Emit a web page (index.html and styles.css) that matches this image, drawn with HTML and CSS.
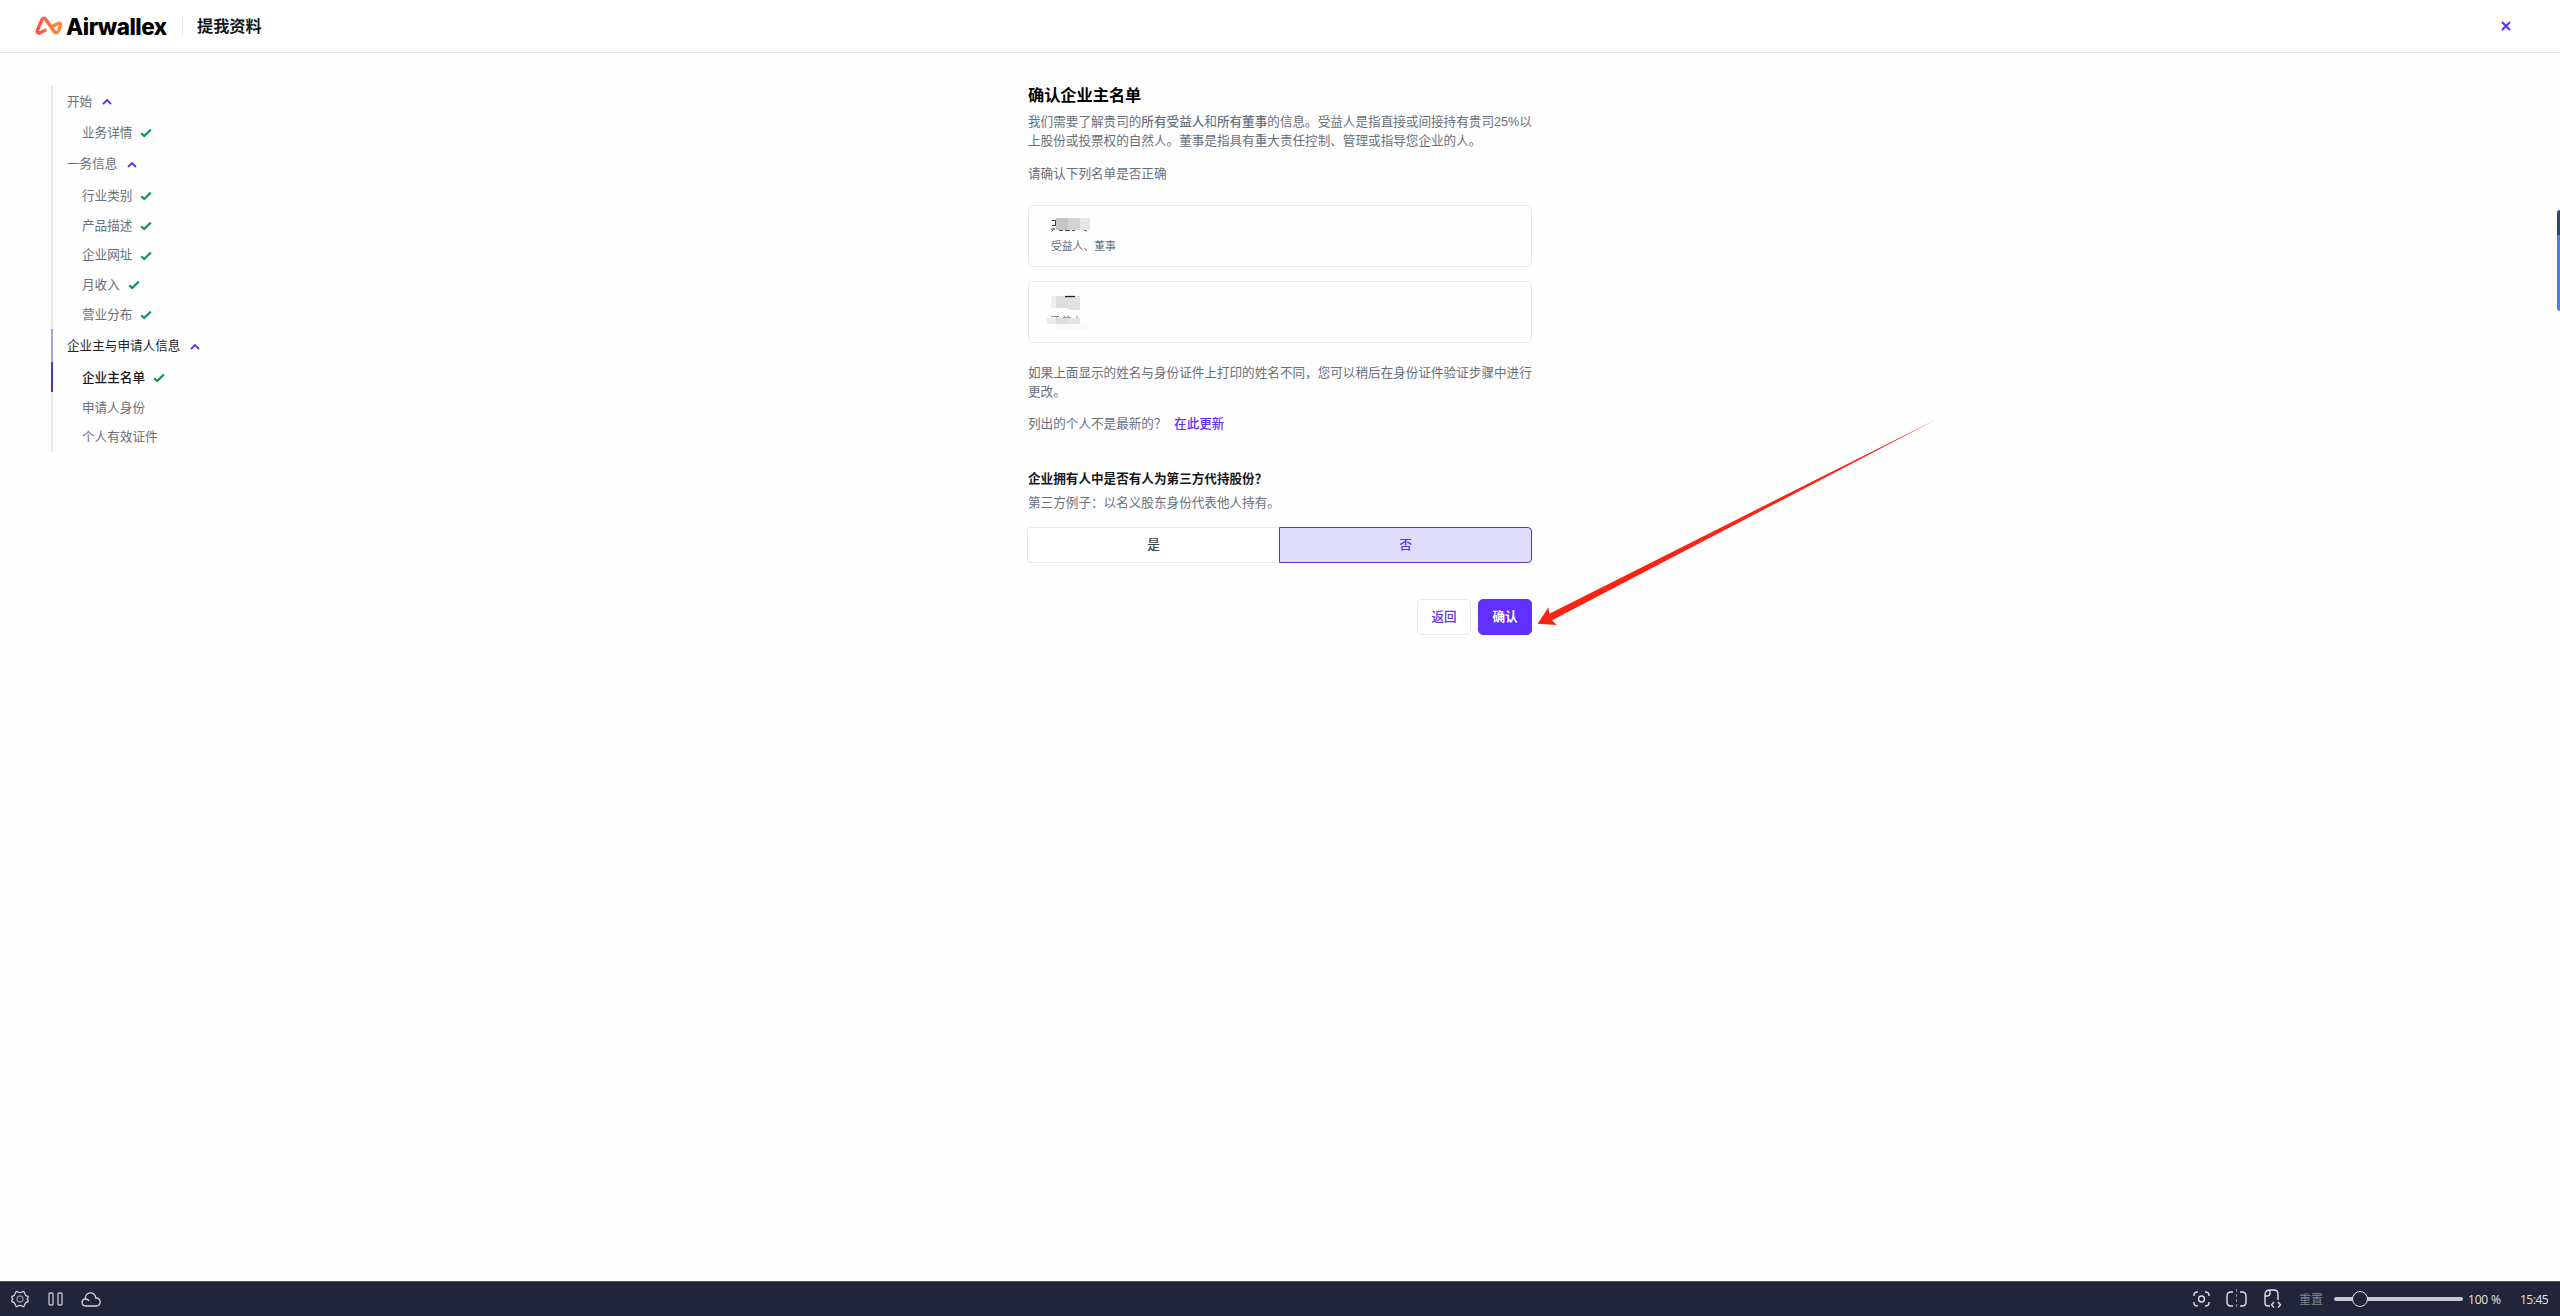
FILE: index.html
```html
<!DOCTYPE html>
<html lang="zh-CN">
<head>
    <meta charset="UTF-8">
    <meta name="viewport" content="width=device-width, initial-scale=1.0">
    <title>Airwallex</title>
    <link rel="stylesheet" href="styles.css">
</head>
<body>
    <!-- shared icons -->
    <svg class="icon-defs" width="0" height="0">
        <symbol id="check" viewBox="0 0 12 10"><path d="M1.2 5.2 L4.2 8 L10.8 1.6" fill="none" stroke="#10955b" stroke-width="2.2"/></symbol>
        <symbol id="chevron" viewBox="0 0 10 8"><path d="M1 6 L5 2 L9 6" fill="none" stroke="#612fff" stroke-width="1.9"/></symbol>
    </svg>

    <header class="header">
        <svg class="logo-icon" width="28" height="20" viewBox="0 0 28 20">
            <defs>
                <linearGradient id="logoColor" x1="0" x2="1"><stop offset="0" stop-color="#ff4f42"/><stop offset="1" stop-color="#ff8e3c"/></linearGradient>
            </defs>
            <path d="M11.5 13.8 L5 16.8 C2.8 17.6 1.8 16 2.5 14 L6.8 3.8 C7.6 2 9.6 1.8 10.8 3.4 L19.3 15.4 C20.6 17.2 22.6 17.2 23.4 15.2 L25.6 9.8 C26.3 7.6 24.6 6.6 23 7.4 L16.8 10.8" fill="none" stroke="url(#logoColor)" stroke-width="3.4"/>
        </svg>
        <span class="logo-text">Airwallex</span>
        <span class="header-divider"></span>
        <span class="header-title">提我资料</span>
        <svg class="close" width="10" height="10" viewBox="0 0 10 10"><path d="M1 1 L9 9 M9 1 L1 9" stroke="#612fff" stroke-width="2.2"/></svg>
    </header>

    <div class="page">
        <nav class="steps">
            <div class="step group first">开始 <svg class="chevron"><use href="#chevron"/></svg></div>
            <div class="step row-wide">业务详情 <svg class="check"><use href="#check"/></svg></div>
            <div class="step group">一务信息 <svg class="chevron"><use href="#chevron"/></svg></div>
            <div class="step">行业类别 <svg class="check"><use href="#check"/></svg></div>
            <div class="step">产品描述 <svg class="check"><use href="#check"/></svg></div>
            <div class="step">企业网址 <svg class="check"><use href="#check"/></svg></div>
            <div class="step">月收入 <svg class="check"><use href="#check"/></svg></div>
            <div class="step">营业分布 <svg class="check"><use href="#check"/></svg></div>
            <div class="step group open">企业主与申请人信息 <svg class="chevron"><use href="#chevron"/></svg></div>
            <div class="step current">企业主名单 <svg class="check"><use href="#check"/></svg></div>
            <div class="step">申请人身份</div>
            <div class="step">个人有效证件</div>
        </nav>

        <main class="content">
            <h1>确认企业主名单</h1>
            <p class="intro">我们需要了解贵司的<b>所有受益人</b>和<b>所有董事</b>的信息。受益人是指直接或间接持有贵司25%以上股份或投票权的自然人。董事是指具有重大责任控制、管理或指导您企业的人。</p>
            <p class="hint">请确认下列名单是否正确</p>

            <div class="card">
                <!-- masked name -->
                <svg class="mask" width="44" height="16" viewBox="0 0 44 16">
                    <path d="M4.5 2.5 H9 M8.5 3 V7 M5 7.5 H9 M4 11 H8 M7 11 L4.5 13.5" stroke="#444" fill="none"/>
                    <path d="M12 12.5 H16 M18 12.5 H23 M25 12.5 H28 M37 12 L40 13" stroke="#555" stroke-width="1"/>
                    <rect x="9" y="0" width="12" height="12" fill="#c4c5c7"/>
                    <rect x="21" y="0" width="12" height="12" fill="#d2d3d5"/>
                    <rect x="33" y="0" width="10" height="12" fill="#e3e6ea"/>
                </svg>
                <div class="role">受益人、董事</div>
            </div>

            <div class="card">
                <!-- masked name and role -->
                <svg class="mask" width="44" height="38" viewBox="0 0 44 38">
                    <rect x="4" y="2" width="6" height="12" fill="#eee"/>
                    <rect x="9" y="2" width="12" height="12" fill="#dcdddf"/>
                    <rect x="21" y="2" width="12" height="14" fill="#e2e3e5"/>
                    <path d="M18 2.5 H28" stroke="#222" stroke-width="1.3"/>
                    <path d="M4 22.5 H12 M10 23 L9 24 M17 21.5 L18 23 M22 21.5 L21 23 M16 23.5 H24 M30 21.5 V24" stroke="#889" stroke-width="0.9" fill="none"/>
                    <rect x="0" y="24" width="9" height="6" fill="#e9eaeb"/>
                    <rect x="9" y="24" width="12" height="6" fill="#dddee0"/>
                    <rect x="21" y="24" width="12" height="6" fill="#e2e3e5"/>
                    <rect x="9" y="30" width="32" height="5" fill="#f8f9fa"/>
                </svg>
            </div>

            <p class="note">如果上面显示的姓名与身份证件上打印的姓名不同，您可以稍后在身份证件验证步骤中进行更改。</p>
            <p class="update">列出的个人不是最新的？ <a href="#">在此更新</a></p>

            <h2>企业拥有人中是否有人为第三方代持股份？</h2>
            <p class="example">第三方例子：以名义股东身份代表他人持有。</p>
            <div class="choice">
                <button class="option">是</button>
                <button class="option selected">否</button>
            </div>

            <div class="actions">
                <button class="btn">返回</button>
                <button class="btn btn-primary">确认</button>
            </div>
        </main>
    </div>

    <!-- arrow pointing at the confirm button -->
    <svg class="arrow" width="402" height="210" viewBox="0 0 402 210">
        <path d="M0.5 206.8 L11.5 190.3 L12.3 196.7 L401 1.5 L15 203.3 L19.8 208 Z" fill="#fb2313"/>
    </svg>
    <div class="side-tab"></div>

    <footer class="toolbar">
        <svg class="tool-gear" width="20" height="18" viewBox="0 0 20 18" fill="none" stroke="#d4d5dc" stroke-width="1.3">
            <path d="M6 1.8 Q7 1 8 2 Q10 3.4 12 2 Q13 1 14 1.8 L15 4 Q15.3 5.6 17 6 Q18.5 6.3 18.2 7.3 L17.3 9 L18.2 10.7 Q18.5 11.7 17 12 Q15.3 12.4 15 14 L14 16.2 Q13 17 12 16 Q10 14.6 8 16 Q7 17 6 16.2 L5 14 Q4.7 12.4 3 12 Q1.5 11.7 1.8 10.7 L2.7 9 L1.8 7.3 Q1.5 6.3 3 6 Q4.7 5.6 5 4 Z"/>
            <circle cx="10" cy="9" r="3" stroke="#85879a"/>
        </svg>
        <svg class="tool-pause" width="15" height="14" viewBox="0 0 15 14" fill="none" stroke="#c4c5cf" stroke-width="1.3">
            <rect x="1" y="1" width="4" height="12" rx="1"/>
            <rect x="10" y="1" width="4" height="12" rx="1"/>
        </svg>
        <svg class="tool-cloud" width="20" height="15" viewBox="0 0 20 15" fill="none" stroke="#d4d5dc" stroke-width="1.3">
            <path d="M4.5 14 C0 14 0 7.2 4.3 7 C4 -1 14.5 -1 14.7 6 C20.5 5.5 20.5 14 15.5 14 Z M4.3 7 Q7 6.8 8 9"/>
        </svg>

        <svg class="tool-focus" width="17" height="16" viewBox="0 0 17 16" fill="none" stroke="#e0e1e6" stroke-width="1.4">
            <path d="M1 5 V4 Q1 1 5 1 M12 1 Q16 1 16 4 V5 M16 11 V12 Q16 15 12 15 M5 15 Q1 15 1 12 V11"/>
            <circle cx="8.5" cy="8" r="3"/>
        </svg>
        <svg class="tool-split" width="21" height="20" viewBox="0 0 21 20" fill="none" stroke="#e0e1e6" stroke-width="1.4">
            <path d="M7 3 H5 Q1 3 1 7 V13 Q1 17 5 17 H7 M14 3 H16 Q20 3 20 7 V13 Q20 17 16 17 H14"/>
            <path d="M10.5 0 V20" stroke="#85879a" stroke-width="1" stroke-dasharray="3 2"/>
        </svg>
        <svg class="tool-page" width="18" height="20" viewBox="0 0 18 20" fill="none" stroke="#e0e1e6" stroke-width="1.4">
            <path d="M6 17 H4 Q1 17 1 14 V6 Q1 1 6 1 H10 Q14 1 14 5 V11 M1 7 H3 Q6 7 6 4 V1 M10 13 L7.5 15.8 L10 18.6 M14 13 L16.5 15.8 L14 18.6"/>
        </svg>
        <span class="reset">重置</span>
        <div class="slider"><span class="knob"></span></div>
        <span class="percent">100 %</span>
        <span class="time">15:45</span>
    </footer>
</body>
</html>
```

FILE: styles.css
```css
* {
    box-sizing: border-box;
}
body {
    margin: 0;
    height: 1316px;
    display: flex;
    flex-direction: column;
    position: relative;
    overflow: hidden;
    background: #fefefe;
    color: #68707a;
    font-family: "Liberation Sans", "Noto Sans CJK SC", sans-serif;
    font-size: 12.6px;
    line-height: 19px;
}
h1, h2, p {
    margin: 0;
}
.icon-defs {
    position: absolute;
}

/* header */
.header {
    display: flex;
    align-items: center;
    height: 53px;
    padding: 0 49px 0 35px;
    border-bottom: 1px solid #e4e4e6;
    background: #fff;
}
.logo-text {
    width: 101px;
    margin-left: 3px;
    font-family: Inter, sans-serif;
    font-size: 22.5px;
    font-weight: 800;
    letter-spacing: -0.5px;
    color: #000;
}
.header-divider {
    width: 1px;
    height: 20px;
    margin: 0 14px 0 15px;
    background: #e8e8ea;
}
.header-title {
    font-size: 16.2px;
    font-weight: 700;
    color: #14171a;
}
.close {
    margin-left: auto;
}

/* step list */
.page {
    flex: 1;
    display: flex;
}
.steps {
    width: 300px;
    margin: 32px 0 0 51px;
}
.step {
    display: flex;
    align-items: center;
    height: 29.7px;
    padding: 2px 0 0 29px;
    border-left: 2px solid #e8e8ea;
}
.step.group {
    height: 33.5px;
    padding-left: 14px;
}
.step.first {
    height: 32px;
}
.step.row-wide {
    height: 30px;
}
.step.open {
    border-color: #a9a0e8;
    color: #22262b;
}
.step.current {
    height: 30px;
    border-color: #5533b8;
    font-weight: 500;
    color: #14171a;
}
.check {
    width: 12px;
    height: 10px;
    margin-left: 8px;
}
.chevron {
    width: 10px;
    height: 8px;
    margin-left: 10px;
}

/* main form */
.content {
    width: 505px;
    margin: 31px 0 0 677px;
    padding-right: 1px;
}
h1 {
    font-size: 16.2px;
    font-weight: 700;
    line-height: 22px;
    color: #000;
}
.intro {
    margin-top: 7px;
}
.intro b {
    font-weight: 500;
}
.hint {
    margin-top: 14px;
}
.card {
    height: 62px;
    margin-top: 14px;
    padding: 12px 18px;
    border: 1px solid #e8e8ea;
    border-radius: 5px;
}
.hint + .card {
    margin-top: 21px;
}
.mask {
    display: block;
}
.role {
    padding-left: 4px;
    font-size: 10.8px;
    line-height: 24px;
}
.note {
    margin-top: 21px;
}
.update {
    margin-top: 13px;
}
.update a {
    margin-left: 4px;
    color: #612fff;
    font-weight: 500;
    text-decoration: none;
}
h2 {
    margin-top: 35px;
    font-size: 12.6px;
    font-weight: 700;
    line-height: 20px;
    color: #14171a;
}
.example {
    margin-top: 5px;
}
button {
    font: inherit;
    font-weight: 500;
}
.choice {
    display: flex;
    margin: 14px 0 0 -1px;
}
.option {
    flex: 1;
    height: 36px;
    padding: 0;
    border: 1px solid #e8e8ea;
    border-right: none;
    border-radius: 4px 0 0 4px;
    background: #fff;
    color: #3e444b;
}
.option.selected {
    border: 1px solid #5a35c4;
    border-radius: 0 4px 4px 0;
    background: #dfdcfc;
    color: #612fff;
}
.actions {
    display: flex;
    justify-content: flex-end;
    gap: 7px;
    margin-top: 36px;
}
.btn {
    width: 54px;
    height: 36px;
    padding: 0;
    border: 1px solid #e8e8ea;
    border-radius: 5px;
    background: #fff;
    color: #612fff;
}
.btn-primary {
    border-color: #612fff;
    background: #612fff;
    color: #fff;
    font-weight: 700;
}

/* overlays */
.arrow {
    position: absolute;
    left: 1537px;
    top: 417px;
}
.side-tab {
    position: absolute;
    right: 0;
    top: 210px;
    width: 3px;
    height: 101px;
    border-radius: 3px 0 0 3px;
    background: linear-gradient(#2c4775 25px, #4a80e8 25px);
}

/* bottom toolbar */
.toolbar {
    display: flex;
    align-items: center;
    height: 35px;
    padding: 0 12px 0 10px;
    border-top: 1px solid #4d5660;
    background: #222539;
    color: #e4e5ea;
    font-family: "Open Sans", "Noto Sans CJK SC", sans-serif;
    font-size: 12px;
}
.tool-pause {
    margin-left: 18px;
}
.tool-cloud {
    margin-left: 18px;
}
.tool-focus {
    margin-left: auto;
}
.tool-split {
    margin-left: 16px;
}
.tool-page {
    margin-left: 17px;
}
.reset {
    margin-left: 17px;
    color: #80828f;
}
.slider {
    position: relative;
    width: 129px;
    height: 4px;
    margin-left: 11px;
    border-radius: 2px;
    background: #c8c9ce;
}
.knob {
    position: absolute;
    left: 18px;
    top: -6px;
    width: 16px;
    height: 16px;
    border: 1px solid #e4e5ea;
    border-radius: 50%;
    background: #222539;
}
.percent {
    width: 34px;
    margin-left: 5px;
    letter-spacing: -0.2px;
    white-space: nowrap;
}
.time {
    width: 28px;
    margin-left: 18px;
    letter-spacing: -0.5px;
}
```
